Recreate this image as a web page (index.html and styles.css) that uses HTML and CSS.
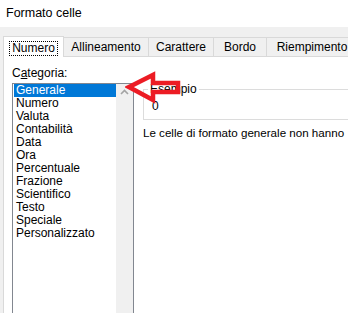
FILE: index.html
```html
<!DOCTYPE html>
<html lang="it">
<head>
    <meta charset="UTF-8">
    <title>Formato celle</title>
    <link rel="stylesheet" href="styles.css">
</head>
<body>

    <div class="titlebar">Formato celle</div>

    <!-- Schede -->
    <div class="tabs">
        <div class="tab tab-active"><span class="focus">Numero</span></div>
        <div class="tab tab-w1">Allineamento</div>
        <div class="tab tab-w2">Carattere</div>
        <div class="tab tab-w3">Bordo</div>
        <div class="tab tab-w4">Riempimento</div>
    </div>

    <div class="page">
        <div class="left">
            <label class="cat-label">C<u>a</u>tegoria:</label>
            <div class="listbox">
                <ul class="items">
                    <li class="selected">Generale</li>
                    <li>Numero</li>
                    <li>Valuta</li>
                    <li>Contabilità</li>
                    <li>Data</li>
                    <li>Ora</li>
                    <li>Percentuale</li>
                    <li>Frazione</li>
                    <li>Scientifico</li>
                    <li>Testo</li>
                    <li>Speciale</li>
                    <li>Personalizzato</li>
                </ul>
                <div class="scrollbar">
                    <svg class="chevron" width="9" height="6" viewBox="0 0 9 6">
                        <path d="M1 5 L4.5 1.5 L8 5" fill="none" stroke="#a3a3a3" stroke-width="1.6"/>
                    </svg>
                </div>
            </div>
        </div>

        <div class="right">
            <fieldset class="sample">
                <legend>Esempio</legend>
                <div class="sample-value">0</div>
            </fieldset>
            <p class="desc">Le celle di formato generale non hanno</p>
        </div>

        <!-- Freccia rossa -->
        <svg class="arrow" width="60" height="36" viewBox="0 0 60 36">
            <polygon points="4,16 28,4 28,12 53,12 53,21 28,21 28,29"
                     fill="none" stroke="#ec1c24" stroke-width="4.5" stroke-linejoin="miter"/>
        </svg>
    </div>

</body>
</html>
```

FILE: styles.css
```css
* {
    margin: 0;
    padding: 0;
    box-sizing: border-box;
}
body {
    width: 348px;
    height: 313px;
    overflow: hidden;
    background: #f0f0f0;
    font-family: "Liberation Sans", Arial, sans-serif;
    font-size: 12px;
    color: #000;
}
.titlebar {
    background: white;
    height: 27px;
    line-height: 26px;
    padding-left: 6px;
    font-size: 12.5px;
}

/* Schede */
.tabs {
    display: flex;
    align-items: flex-end;
    height: 30px;
    padding-left: 3px;
    white-space: nowrap;
    overflow: hidden;
}
.tab {
    height: 20px;
    line-height: 18px;
    border: 1px solid #d9d9d9;
    border-bottom: none;
    margin-left: -1px;
    text-align: center;
    flex-shrink: 0;
}
.tab-active {
    height: 21px;
    width: 61px;
    margin-left: 0;
    background: white;
    position: relative;
    z-index: 1;
    padding-top: 2px;
}
.focus {
    display: inline-block;
    line-height: 13px;
    padding: 0 2px;
    outline: 1px dotted #000;
}
.tab-w1 { width: 86px; }
.tab-w2 { width: 66px; }
.tab-w3 { width: 54px; }
.tab-w4 { width: 92px; }

/* Pagina */
.page {
    position: relative;
    background: white;
    margin-left: 3px;
    border-left: 1px solid #d9d9d9;
    border-top: 1px solid #d9d9d9;
    margin-top: -1px;
    height: 257px;
    display: flex;
    padding: 9px 0 0 8px;
    overflow: hidden;
}
.cat-label {
    display: block;
    line-height: 15px;
    height: 17px;
}
.listbox {
    width: 122px;
    height: 240px;
    border: 1px solid #828790;
    border-bottom: none;
    display: flex;
}
.items {
    list-style: none;
    flex: 1;
    padding: 0 0 0 1px;
}
.items li {
    height: 13px;
    line-height: 13px;
    padding-left: 2px;
    white-space: nowrap;
}
.items .selected {
    background: #0078d7;
    color: white;
}
.scrollbar {
    width: 17px;
    background: #f0f0f0;
    display: flex;
    justify-content: center;
    padding-top: 5px;
}
.chevron {
    display: block;
}
.right {
    margin-left: 9px;
    padding-top: 16px;
    width: 205px;
    flex-shrink: 0;
}
.sample {
    border: 1px solid #dcdcdc;
    border-right: none;
    padding: 2px 8px 2px 8px;
    height: 38px;
}
.sample legend {
    margin-left: -4px;
    padding: 0 2px;
    line-height: 15px;
}
.sample-value {
    line-height: 15px;
}
.desc {
    margin-top: 5px;
    line-height: 15px;
    font-size: 11.6px;
    white-space: nowrap;
}
.arrow {
    position: absolute;
    left: 121px;
    top: 14px;
}
```
